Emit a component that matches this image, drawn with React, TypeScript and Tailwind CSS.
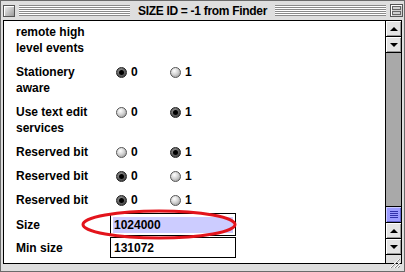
import type { ReactNode } from 'react'

const STRIPES =
  'bg-[repeating-linear-gradient(to_bottom,#8a8a8a_0px,#8a8a8a_1px,#ffffff_1px,#ffffff_2px)]'

function Radio({ on }: { on: boolean }) {
  if (on) {
    return (
      <span className="w-[11px] h-[11px] rounded-full border border-[#222] bg-[radial-gradient(circle_at_40%_35%,#9a9a9a,#4a4a4a_70%)] flex items-center justify-center">
        <span className="w-[5px] h-[5px] rounded-full bg-black" />
      </span>
    )
  }
  return (
    <span className="w-[11px] h-[11px] rounded-full border border-[#555] bg-[radial-gradient(circle_at_38%_32%,#ffffff,#d4d4d4_45%,#8a8a8a_100%)]" />
  )
}

function BitRow({ lines, value }: { lines: string[]; value: 0 | 1 }) {
  return (
    <div className="flex items-start">
      <div className="w-[100px] leading-[16px]">
        {lines.map((l) => (
          <div key={l}>{l}</div>
        ))}
      </div>
      <div className="flex items-center h-[16px] w-[54px] gap-[4px]">
        <Radio on={value === 0} />
        <span>0</span>
      </div>
      <div className="flex items-center h-[16px] gap-[4px]">
        <Radio on={value === 1} />
        <span>1</span>
      </div>
    </div>
  )
}

function Field({ label, value, selected, h }: { label: string; value: string; selected?: boolean; h: string }) {
  return (
    <div className="flex items-center">
      <div className="w-[94px]">{label}</div>
      <div className={`w-[126px] ${h} border border-black bg-white flex items-center px-[2px]`}>
        <span className={`flex-1 h-[16px] leading-[16px] pl-[1px] ${selected ? 'bg-[#ccccff]' : ''}`}>{value}</span>
      </div>
    </div>
  )
}

function Arrow({ up }: { up: boolean }) {
  return (
    <div className="h-[16px] border-b border-black bg-[#e4e4e4] flex items-center justify-center shadow-[inset_1px_1px_0_#fff,inset_-1px_-1px_0_#999]">
      <svg width="8" height="4" viewBox="0 0 8 4">
        {up ? <polygon points="4,0 8,4 0,4" fill="#000" /> : <polygon points="0,0 8,0 4,4" fill="#000" />}
      </svg>
    </div>
  )
}

function Scrollbar() {
  return (
    <div className="w-[16px] border-l border-black flex flex-col bg-[#dedede]">
      <Arrow up />
      <Arrow up={false} />
      <div className="flex-1 bg-[#a9a9a9] border-b border-black" />
      <div className="h-[16px] border-b border-black bg-[#9c9cff] flex flex-col items-center justify-center gap-[1px] shadow-[inset_1px_1px_0_#ccccff,inset_-1px_-1px_0_#6666cc]">
        {[0, 1, 2, 3].map((i) => (
          <span key={i} className="w-[8px] h-[1px] bg-[#3333aa]" />
        ))}
      </div>
      <Arrow up />
      <Arrow up={false} />
      <div className="h-[8px] bg-[#dedede]" />
    </div>
  )
}

function Content({ children }: { children: ReactNode }) {
  return <div className="flex-1 bg-white pl-[12px] pt-[3px] flex flex-col overflow-hidden">{children}</div>
}

export default function App() {
  return (
    <div className="relative w-[405px] h-[272px] bg-[#dedede] border border-[#6a6a6a] flex flex-col font-['Liberation_Sans',Arial,sans-serif] font-bold text-[12px] text-black overflow-hidden">
      {/* title bar */}
      <div className="h-[19px] flex items-center pl-[2px] pr-[1px] gap-[4px]">
        <div className="w-[12px] h-[12px] border border-[#555] bg-[linear-gradient(135deg,#f4f4f4,#9a9a9a)] shadow-[inset_1px_1px_0_#fff]" />
        <div className={`flex-1 h-[11px] ${STRIPES}`} />
        <div className="px-[4px] leading-[14px] tracking-[-0.3px] whitespace-nowrap">SIZE ID = -1 from Finder</div>
        <div className={`flex-1 h-[11px] ${STRIPES}`} />
        <div className="w-[13px] h-[13px] border border-[#555] bg-[#d0d0d0] flex flex-col justify-between p-[1px] shadow-[inset_1px_1px_0_#fff]">
          <span className="h-[4px] border border-[#666]" />
          <span className="h-[4px] border border-[#666]" />
        </div>
      </div>

      {/* body */}
      <div className="mx-[2px] h-[244px] border border-black flex">
        <Content>
          <div className="leading-[16px] pt-[0px]">
            <div>remote high</div>
            <div>level events</div>
          </div>
          <div className="mt-[8px] flex flex-col gap-[8px]">
            <BitRow lines={['Stationery', 'aware']} value={0} />
            <BitRow lines={['Use text edit', 'services']} value={1} />
            <BitRow lines={['Reserved bit']} value={1} />
            <BitRow lines={['Reserved bit']} value={0} />
            <BitRow lines={['Reserved bit']} value={0} />
          </div>
          <div className="mt-[5px] flex flex-col gap-[1px]">
            <Field label="Size" value="1024000" selected h="h-[23px]" />
            <Field label="Min size" value="131072" h="h-[21px]" />
          </div>
        </Content>
        <Scrollbar />
      </div>

      {/* grow box */}
      <svg className="absolute left-[386px] top-[256px]" width="14" height="12" viewBox="0 0 14 12">
        <line x1="3" y1="11" x2="12" y2="2" stroke="#fff" strokeWidth="1" />
        <line x1="4" y1="11" x2="13" y2="2" stroke="#888" strokeWidth="1" />
        <line x1="7" y1="11" x2="13" y2="5" stroke="#fff" strokeWidth="1" />
        <line x1="8" y1="11" x2="13" y2="6" stroke="#888" strokeWidth="1" />
        <line x1="10" y1="11" x2="13" y2="8" stroke="#fff" strokeWidth="1" />
        <line x1="11" y1="11" x2="13" y2="9" stroke="#888" strokeWidth="1" />
      </svg>

      {/* red annotation */}
      <svg className="absolute left-[79px] top-[208px] pointer-events-none" width="158" height="31" viewBox="0 0 158 31">
        <ellipse cx="79" cy="15.5" rx="76" ry="13.5" fill="none" stroke="#e3141c" strokeWidth="3" />
      </svg>
    </div>
  )
}
